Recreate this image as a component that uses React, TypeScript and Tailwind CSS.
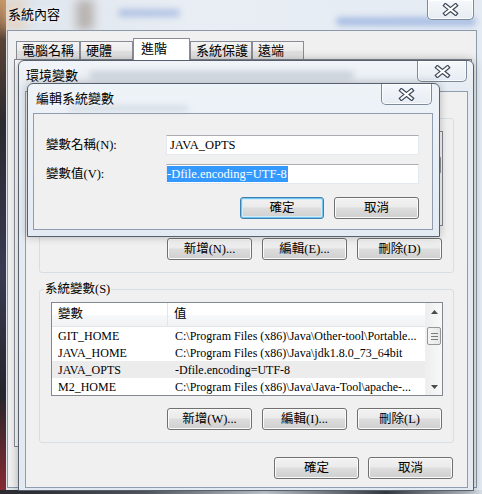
import React from "react";

function CloseX() {
  return (
    <svg width="17" height="13" viewBox="0 0 17 13">
      <path d="M3.5 2.5 L13.5 10.5 M13.5 2.5 L3.5 10.5" stroke="#3d4756" strokeWidth="4.4" strokeLinecap="square" fill="none" />
      <path d="M3.5 2.5 L13.5 10.5 M13.5 2.5 L3.5 10.5" stroke="#ffffff" strokeWidth="2" strokeLinecap="square" fill="none" />
    </svg>
  );
}

function CloseBtn({ className }: { className: string }) {
  return (
    <div
      className={`absolute flex items-center justify-center rounded-b-[5px] border border-t-0 border-[#7f8a99] bg-[linear-gradient(#f5f8fb,#e6ecf3)] shadow-[inset_0_0_0_1px_rgba(255,255,255,0.8)] ${className}`}
    >
      <CloseX />
    </div>
  );
}

function Btn({ label, w = "w-[85px]", def = false }: { label: string; w?: string; def?: boolean }) {
  return (
    <div
      className={`flex h-[22px] ${w} items-center justify-center rounded-[3px] border text-[12.5px] leading-none text-black bg-[linear-gradient(#f2f2f2_0%,#ebebeb_45%,#dddddd_50%,#cfcfcf_100%)] ${
        def
          ? "border-[#3c7fb1] shadow-[inset_0_0_0_1px_#74c6ee,inset_0_0_0_2px_#d3ecf9]"
          : "border-[#707070] shadow-[inset_0_0_0_1px_#fbfbfb]"
      }`}
    >
      {label}
    </div>
  );
}

function Tab({ label, w, selected = false }: { label: string; w: string; selected?: boolean }) {
  if (selected) {
    return (
      <div
        className={`relative z-10 -mb-px flex h-[22px] ${w} items-start border border-b-0 border-[#898c95] bg-white pl-[7px] pt-[1px] text-[13px] leading-[17px]`}
      >
        {label}
      </div>
    );
  }
  return (
    <div
      className={`flex h-[18px] ${w} items-center border border-b-0 border-[#898c95] bg-[linear-gradient(#f4f4f4,#ebebeb_50%,#dedede_51%,#e6e6e6)] pl-[5px] text-[13px] leading-none`}
    >
      {label}
    </div>
  );
}

type Row = { name: string; value: string; sel?: boolean };

function Scrollbar() {
  return (
    <div className="flex w-[17px] shrink-0 flex-col border-l border-[#f0f0f0] bg-[linear-gradient(90deg,#eeeeee,#f8f8f8)]">
      <div className="flex h-[17px] items-center justify-center">
        <svg width="7" height="4" viewBox="0 0 7 4">
          <path d="M0 4 L3.5 0 L7 4 Z" fill="#4a4a4a" />
        </svg>
      </div>
      <div className="flex-1">
        <div className="mx-[1px] mt-[7px] flex h-[18px] flex-col items-center justify-center gap-[2px] rounded-[2px] border border-[#979797] bg-[linear-gradient(90deg,#f5f5f5,#e6e6e6)]">
          <div className="h-px w-[7px] bg-[#7a7a7a]" />
          <div className="h-px w-[7px] bg-[#7a7a7a]" />
          <div className="h-px w-[7px] bg-[#7a7a7a]" />
        </div>
      </div>
      <div className="flex h-[17px] items-center justify-center">
        <svg width="7" height="4" viewBox="0 0 7 4">
          <path d="M0 0 L3.5 4 L7 0 Z" fill="#4a4a4a" />
        </svg>
      </div>
    </div>
  );
}

function ListView({ rows, h, header = true }: { rows: Row[]; h: string; header?: boolean }) {
  return (
    <div className={`flex ${h} border border-[#828790] bg-white`}>
      <div className="flex flex-1 flex-col overflow-hidden">
        <div className="flex h-[24px] shrink-0 items-stretch border-b border-[#e5e5e5] bg-[linear-gradient(#ffffff,#ffffff_50%,#f7f8fa_51%,#f2f3f5)] text-[12.5px]">
          <div className="flex w-[116px] shrink-0 items-center border-r border-[#e5e5e5] pl-[6px]">{header ? "變數" : ""}</div>
          <div className="flex items-center pl-[6px]">{header ? "值" : ""}</div>
        </div>
        {rows.map((r) => (
          <div
            key={r.name}
            className={`flex h-[17px] shrink-0 items-center whitespace-nowrap text-[12px] leading-none ${r.sel ? "bg-[#ececec]" : ""}`}
          >
            <div className="w-[117px] shrink-0 pl-[6px]">{r.name}</div>
            <div className="pl-[6px]">{r.value}</div>
          </div>
        ))}
      </div>
      <Scrollbar />
    </div>
  );
}

const sysRows: Row[] = [
  { name: "GIT_HOME", value: "C:\\Program Files (x86)\\Java\\Other-tool\\Portable..." },
  { name: "JAVA_HOME", value: "C:\\Program Files (x86)\\Java\\jdk1.8.0_73_64bit" },
  { name: "JAVA_OPTS", value: "-Dfile.encoding=UTF-8", sel: true },
  { name: "M2_HOME", value: "C:\\Program Files (x86)\\Java\\Java-Tool\\apache-..." },
];

export default function App() {
  return (
    <div className="relative h-[494px] w-[482px] overflow-hidden bg-[linear-gradient(90deg,#dde4ec,#e9eef4_40%,#e4ebf3)] font-['Liberation_Serif','Noto_Sans_CJK_TC',serif] text-black">
      {/* desktop showing through the glass frame */}
      <div className="absolute left-0 top-0 h-full w-[6px] bg-[linear-gradient(#c09060,#5b4436_8%,#2b2a2f_25%,#3a3a52_55%,#26262c_80%,#8a2a30)]" />
      <div className="absolute left-0 top-0 h-[30px] w-[26px] bg-[#e8b888] opacity-40 blur-[6px]" />
      <div className="absolute left-[76px] top-0 h-[30px] w-[18px] bg-[#7d6858] opacity-40 blur-[5px]" />
      <div className="absolute left-[118px] top-[9px] h-[8px] w-[62px] rounded bg-[#7f9cd6] opacity-50 blur-[3px]" />
      <div className="absolute left-[336px] top-[17px] h-[9px] w-[140px] rounded bg-[#6f92d4] opacity-50 blur-[3px]" />
      <div className="absolute bottom-0 left-0 h-[4px] w-full bg-[linear-gradient(90deg,#2a2a30,#5a5e66_30%,#cfd6de_55%,#3a3e46_80%,#d8dee6)]" />

      {/* 系統內容 window */}
      <div className="absolute left-[8px] top-[7px] text-[13px] leading-[16px] [text-shadow:0_0_6px_#fff]">系統內容</div>
      <CloseBtn className="left-[427px] top-0 h-[20px] w-[47px]" />
      <div className="absolute left-[7px] top-[30px] flex h-[458px] w-[470px] flex-col border border-[#8a98aa] bg-[#f0f0f0] pl-[6px] pt-[7px]">
        <div className="flex h-[21px] items-end pl-[2px]">
          <Tab label="電腦名稱" w="w-[64px]" />
          <Tab label="硬體" w="w-[53px]" />
          <Tab label="進階" w="w-[57px]" selected />
          <Tab label="系統保護" w="w-[62px]" />
          <Tab label="遠端" w="w-[52px]" />
        </div>
        <div className="h-[388px] w-[458px] border border-[#898c95] bg-white" />
      </div>

      {/* 環境變數 window */}
      <div className="absolute left-[18px] top-[60px] flex h-[431px] w-[456px] flex-col rounded-t-[6px] border border-[#56606e] bg-[linear-gradient(#f1f5f9,#e5ebf2_30px,#e2e9f1)] shadow-[0_0_10px_rgba(0,0,0,0.3)]">
        <div className="flex h-[30px] shrink-0 items-center pl-[7px] text-[13px] [text-shadow:0_0_6px_#fff]">環境變數</div>
        <div className="absolute left-[70px] top-[10px] h-[8px] w-[265px] rounded bg-[#9aa3ae] opacity-40 blur-[3px]" />
        <CloseBtn className="left-[398px] top-0 h-[21px] w-[50px]" />
        <div className="mb-[2px] ml-[6px] mr-[5px] flex flex-1 flex-col border border-[#8e9cae] bg-[#f0f0f0] px-[13px]">
          {/* user variables (covered by the edit dialog) */}
          <div className="relative mt-[26px] flex h-[155px] flex-col rounded-[3px] border border-[#d5dfe5] pb-[12px] pt-[12px]">
            <div className="pl-[11px] pr-[10px]">
              <ListView rows={[]} h="h-[95px]" header={false} />
            </div>
            <div className="mt-[12px] flex justify-end gap-[10px] pr-[11px]">
              <Btn label="新增(N)..." />
              <Btn label="編輯(E)..." />
              <Btn label="刪除(D)" />
            </div>
          </div>
          {/* 系統變數 */}
          <div className="relative mt-[16px] flex h-[154px] flex-col rounded-[3px] border border-[#d5dfe5] pb-[12px] pt-[12px]">
            <div className="absolute -top-[9px] left-[4px] bg-[#f0f0f0] px-[1px] text-[12.5px] leading-[16px]">系統變數(S)</div>
            <div className="pl-[11px] pr-[10px]">
              <ListView rows={sysRows} h="h-[94px]" />
            </div>
            <div className="mt-[12px] flex justify-end gap-[10px] pr-[11px]">
              <Btn label="新增(W)..." />
              <Btn label="編輯(I)..." />
              <Btn label="刪除(L)" />
            </div>
          </div>
          <div className="mt-[14px] flex justify-end gap-[9px] pr-[1px]">
            <Btn label="確定" />
            <Btn label="取消" />
          </div>
        </div>
      </div>

      {/* 編輯系統變數 dialog */}
      <div className="absolute left-[27px] top-[83px] flex h-[154px] w-[413px] flex-col rounded-t-[6px] border border-[#56606e] bg-[linear-gradient(#eef3f8,#e3eaf2)] shadow-[0_0_8px_rgba(0,0,0,0.25)]">
        <div className="flex h-[29px] shrink-0 items-center pl-[8px] text-[13px] [text-shadow:0_0_6px_#fff]">編輯系統變數</div>
        <div className="absolute left-[40px] top-[22px] h-[5px] w-[120px] rounded bg-[#aab3be] opacity-40 blur-[3px]" />
        <CloseBtn className="left-[353px] top-0 h-[21px] w-[51px]" />
        <div className="mb-[6px] ml-[5px] mr-[6px] flex flex-1 flex-col border border-[#8e9cae] bg-[#f0f0f0] pl-[12px] pr-[13px]">
          <div className="mt-[21px] flex h-[20px] items-center text-[12.5px]">
            <div className="w-[120px]">變數名稱(N):</div>
            <div className="flex h-[20px] w-[253px] items-center border border-[#e3e9ef] border-t-[#abadb3] bg-white pl-[3px] leading-none">
              JAVA_OPTS
            </div>
          </div>
          <div className="mt-[9px] flex h-[20px] items-center text-[12.5px]">
            <div className="w-[120px]">變數值(V):</div>
            <div className="flex h-[20px] w-[253px] items-stretch border border-[#e3e9ef] border-t-[#abadb3] bg-white py-[1px]">
              <span className="flex items-center bg-[#3399ff] pr-[1px] leading-none text-white">-Dfile.encoding=UTF-8</span>
            </div>
          </div>
          <div className="mt-[13px] flex justify-end gap-[10px]">
            <Btn label="確定" w="w-[84px]" def />
            <Btn label="取消" />
          </div>
        </div>
      </div>
    </div>
  );
}
